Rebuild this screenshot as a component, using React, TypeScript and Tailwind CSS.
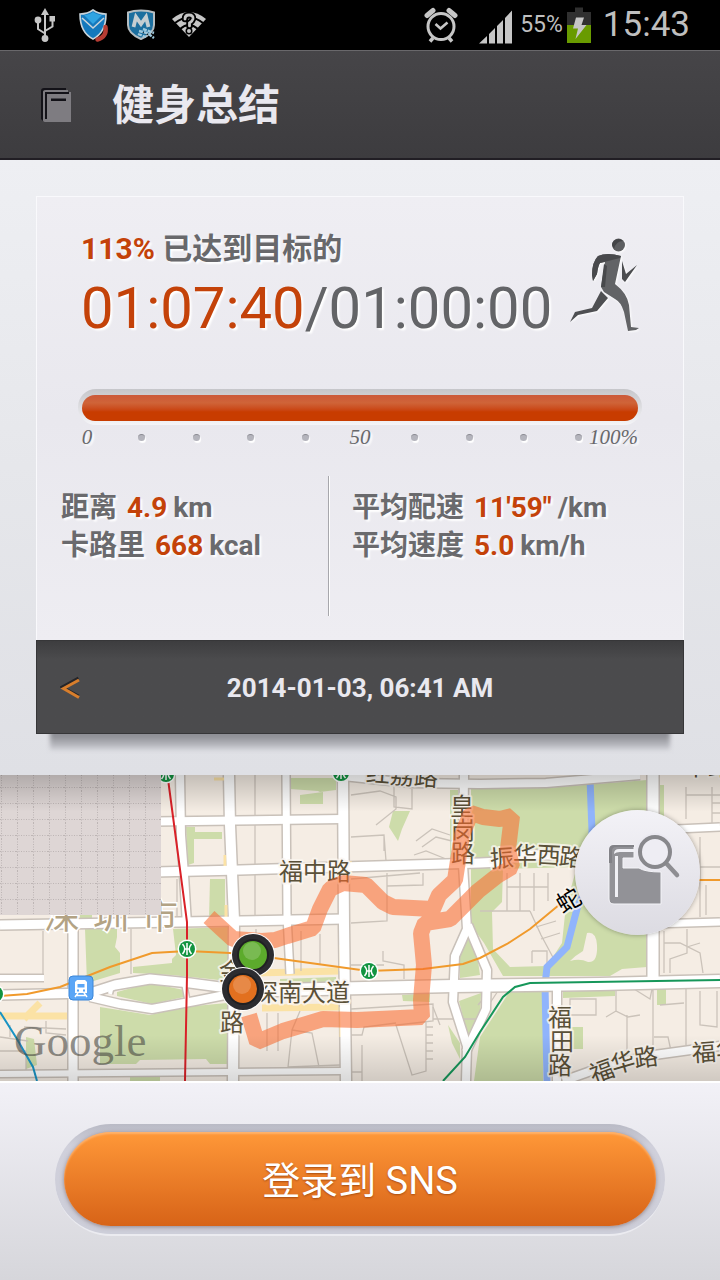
import { ReactNode } from "react";

type Stat = { label: string; value: string; unit: string };
type Label = { text: string; x: number; y: number; rotate?: number };

const leftStats: Stat[] = [
  { label: "距离", value: "4.9", unit: "km" },
  { label: "卡路里", value: "668", unit: "kcal" },
];

const rightStats: Stat[] = [
  { label: "平均配速", value: "11'59\"", unit: "/km" },
  { label: "平均速度", value: "5.0", unit: "km/h" },
];

const scaleMarks = ["0", "", "", "", "", "50", "", "", "", "", "100%"];

const roads: { d: string; w: number }[] = [
  { d: "M155 46.500L342 44", w: 8 },
  { d: "M155 97L240 95L480 88L500 87L520 80L580 80", w: 9 },
  { d: "M0 150L240 146L344 144", w: 9 },
  { d: "M0 220L90 218L115 210L150 204L190 208L235 214", w: 9 },
  { d: "M90 222L120 229L152 234L195 226L235 218", w: 8 },
  { d: "M110 219L112 210M184 208L188 228", w: 4 },
  { d: "M0 203L44 203", w: 6 },
  { d: "M0 299L344 296", w: 6 },
  { d: "M230 216L453 211L600 209L720 206", w: 12 },
  { d: "M73 150L73 306", w: 9 },
  { d: "M180 0L181 60L184 100L187 150", w: 8 },
  { d: "M229 0L230 50L234 145L233 306", w: 10 },
  { d: "M286 0L287 140L290 199", w: 7 },
  { d: "M343 0L344 150L346 306", w: 10 },
  { d: "M464 0L463 90L467 154L455 181L453 227L467 271L466 306", w: 8 },
  { d: "M468 150L487 195L486 234L466 277", w: 8 },
  { d: "M343 1L410 8L480 9L546 8L640 0", w: 8 },
  { d: "M653 0L653 205", w: 11 },
  { d: "M557 212L557 306", w: 8 },
  { d: "M655 55L720 52", w: 7 },
  { d: "M653 149L720 147", w: 7 },
  { d: "M563 306L605 291L647 281L720 271", w: 8 },
];

const lanes = [
  "M255 0L255 144M256 154L256 194",
  "M177 104L177 144M131 154L131 199M43 156L43 200",
  "M351 20L380 16L396 22L396 34L376 50M394 10L394 32L412 34L412 14",
  "M351 62L384 60L386 86M384 60L384 76",
  "M416 66L432 54L450 60M422 72L436 62L452 66M414 80L426 76L446 84",
  "M387 98L387 146L351 148M387 111L423 110L423 98M351 104L420 98",
  "M383 176L383 186L404 190L404 204M351 190L384 190",
  "M320 159L320 190M301 156L301 196",
  "M351 234L433 229L433 246L415 248L396 250L412 300L426 296L426 247",
  "M351 260L362 260L364 252L396 248M433 244L480 244M433 232L440 250",
  "M426 252L433 252M426 260L433 260M426 268L433 268M426 276L433 276M426 284L433 284",
  "M300 236L292 255L288 292L340 290M292 255L312 258L319 292M267 238L267 276M278 238L278 276",
  "M351 297L362 297L362 306M362 270L362 297",
  "M507 98L507 136M520 98L520 136M534 98L534 136M548 98L548 126M507 112L548 112M480 136L530 136",
  "M530 136L541 160L556 188M536 152L556 146M541 164L560 158M532 176L547 176L547 190M532 176L532 188",
  "M686 12L686 44M712 12L712 50M686 20L720 20M712 28L720 28M712 38L720 38",
  "M700 62L700 142M686 92L720 92M706 110L706 140M668 112L668 140",
  "M664 156L664 198M687 154L687 178L670 184L670 198M687 172L700 168M664 168L680 168L700 178L703 198",
  "M616 214L616 236L628 242L640 240M627 240L627 280M653 214L653 270M616 236L606 242M634 214L650 224L652 214",
  "M700 216L700 250L717 252L717 216M654 262L668 262L671 276M570 224L596 224L596 240L570 240Z",
  "M686 214L686 270M660 230L684 228",
  "M0 262L28 266M0 276L26 276L26 296M46 246L46 258L66 260M24 252L66 254M10 250L10 262",
  "M478 230L500 204M482 240L498 216",
];

const parks = [
  "M471 14L546 13L647 5L647 192L622 194L610 201L503 201L484 168L471 150Z",
  "M474 306L480 262L510 216L543 216L543 306Z",
  "M85 154L117 154L117 162L115 172L120 178L120 198L87 208Z",
  "M173 154L228 152L228 206L172 200L172 184L176 180Z",
  "M133 192L172 188L172 200L133 198Z",
  "M100 232L150 240L184 232L227 228L227 289L210 289L206 284L140 285L136 289L100 289Z",
  "M117 217L150 208L184 215L184 222L152 229L117 221Z",
  "M210 104L225 104L225 144L209 144Z",
  "M186 52L195 52L195 57L222 57L222 64L194 64L194 88L188 90Z",
  "M26 262L34 264L37 290L26 294Z",
  "M290 3L336 3L336 15L320 17L318 16L290 14Z",
  "M300 20L323 17L323 29L300 29Z",
  "M393 36L410 36L402 54L398 66L389 52Z",
  "M280 204L336 202L336 208L280 210Z",
  "M402 220L430 218L430 227L403 226Z",
  "M450 15L458 15L458 80L450 86Z",
  "M460 170L470 164L478 186L480 200L460 203Z",
  "M459 226L481 218L480 242L468 262Z",
  "M448 250L460 268L460 284L452 268Z",
  "M563 217L615 214L615 221L563 223Z",
  "M570 252L583 252L583 274L570 274Z",
  "M657 213L666 213L666 230L657 230Z",
  "M660 10L664 10L664 52L660 52Z",
  "M80 134L92 134L92 143L80 144Z",
  "M130 302L160 302L160 306L130 306Z",
];

const mapLabels: Label[] = [
  { text: "福中路", x: 315, y: 97 },
  { text: "深南大道", x: 302, y: 218 },
  { text: "红荔路", x: 402, y: 1, rotate: 4 },
  { text: "皇", x: 462, y: 32 },
  { text: "岗", x: 463, y: 56 },
  { text: "路", x: 463, y: 79 },
  { text: "振", x: 502, y: 84, rotate: -4 },
  { text: "华", x: 525, y: 81 },
  { text: "西", x: 549, y: 81, rotate: 3 },
  { text: "路", x: 571, y: 83, rotate: 6 },
  { text: "金", x: 231, y: 197 },
  { text: "路", x: 232, y: 248 },
  { text: "福", x: 560, y: 243 },
  { text: "田", x: 562, y: 267 },
  { text: "路", x: 560, y: 291 },
  { text: "福", x: 602, y: 297, rotate: -20 },
  { text: "华", x: 623, y: 288, rotate: -16 },
  { text: "路", x: 646, y: 283, rotate: -8 },
  { text: "福华", x: 716, y: 277, rotate: -4 },
  { text: "中路", x: 708, y: -8 },
];

const track =
  "M209 142L233 164L262 166L275 165L287 161L313 153L320 134L330 114L343 108L366 110L383 127L393 132L433 134L439 120L455 105L462 60L471 38L483 42L500 44L512 41L508 74L512 92L497 101L478 116L450 144L425 148L421 158L424 190L421 225L422 242L357 245L323 244L283 256L257 267L249 240";

const metroStops = [
  [187, 174],
  [369, 196],
  [166, -1],
  [341, -2],
  [-5, 219],
];

const UsbIcon = () => (
  <svg viewBox="0 0 36 36" className="size-9">
    <g fill="none" stroke="#c6c6c6" strokeWidth="2">
      <path d="M18 6V32M18 26.500L11 22V14M18 24L25.500 19.500V12" />
    </g>
    <g fill="#c6c6c6">
      <path d="M18 1L22 8H14Z" />
      <circle cx="18" cy="31.500" r="3.400" />
      <circle cx="11" cy="13" r="3.400" />
      <path d="M22.500 9h5.500v5.500h-5.500z" />
    </g>
  </svg>
);

const CallShieldIcon = () => (
  <svg viewBox="0 0 36 36" className="size-9">
    <path
      d="M18 3C22 6 27 7 31 7C31 18 28 27 18 32C8 27 5 18 5 7C9 7 14 6 18 3Z"
      fill="#1479bd"
      stroke="#c9d4da"
      strokeWidth="1.600"
    />
    <path d="M9 8C13 8 16 6 18 5C20 6 23 8 27 8L18 17Z" fill="#30a4e2" />
    <path d="M7 11L18 21L29 11" fill="none" stroke="#c9d4da" strokeWidth="1.600" />
    <path d="M30.500 20C31.500 26 29 31 22.500 32.500" fill="none" stroke="#b63c33" strokeWidth="4.500" strokeLinecap="round" />
  </svg>
);

const MobileShieldIcon = () => (
  <svg viewBox="0 0 36 36" className="size-9">
    <path
      d="M18 3.500C22 3.500 27 4 31 5.500V18C31 25 25 29 18 32C11 29 5 25 5 18V5.500C9 4 14 3.500 18 3.500Z"
      fill="#1c6f9f"
      stroke="#b5bdc1"
      strokeWidth="2"
    />
    <path d="M10.500 20L13 10L18 17L23 10L25.500 20" fill="none" stroke="#c5ced2" strokeWidth="3.800" />
    <path d="M16 24L24 26L31 31M20 22L31 26M15 27L23 30" stroke="#9fc9dd" strokeWidth="2.400" strokeDasharray="4 1" />
  </svg>
);

const WifiUnknownIcon = () => (
  <svg viewBox="0 0 36 36" className="size-9">
    <path d="M1 12Q18 -2 35 12L18 30Z" fill="#c6c6c6" />
    <path d="M4 16Q18 5 32 16M9 22Q18 14 27 22" fill="none" stroke="#000" strokeWidth="2" />
    <g fill="none" strokeLinecap="round">
      <path d="M14 12Q14 8 18 8Q22.500 8 22 12Q21.500 14 18.500 16V19" stroke="#000" strokeWidth="6.500" />
      <path d="M14 12Q14 8 18 8Q22.500 8 22 12Q21.500 14 18.500 16V19" stroke="#c6c6c6" strokeWidth="2.800" />
    </g>
    <circle cx="18" cy="24" r="3.500" />
    <circle cx="18" cy="24" r="2" fill="#c6c6c6" />
  </svg>
);

const AlarmIcon = () => (
  <svg viewBox="0 0 34 36" className="h-9 w-[34px]" fill="none" stroke="#c6c6c6">
    <circle cx="17" cy="19.500" r="13" strokeWidth="3" />
    <path d="M11.500 17L16.500 21.500L23.500 15.500" strokeWidth="2.600" />
    <path d="M3 8.500L9 3.500M31 8.500L25 3.500" strokeWidth="5" strokeLinecap="round" />
    <path d="M9 31L6 34.500M25 31L28 34.500" strokeWidth="3.500" />
  </svg>
);

const StatusBar = () => (
  <div className="flex h-[50px] items-center justify-between bg-black pl-[27px] pr-[30px] font-['Roboto',sans-serif] text-[#bfbfbf]">
    <div className="flex items-center gap-3">
      <UsbIcon />
      <CallShieldIcon />
      <MobileShieldIcon />
      <WifiUnknownIcon />
    </div>
    <div className="flex items-center">
      <AlarmIcon />
      <svg viewBox="0 0 34 34" className="ml-5 mt-1 h-[34px] w-[34px]" fill="#c6c6c6">
        <path d="M1 33.500L9 26V33.500ZM11 24L17 18V33.500H11ZM19 16L25 10V33.500H19ZM27 8L34 0.500V33.500H27Z" />
      </svg>
      <span className="ml-2 text-[23px] leading-8">55%</span>
      <svg viewBox="0 0 24 36" className="mx-1 h-9 w-6">
        <path d="M8 0.500H16V5H24V18H0V5H8Z" fill="#303030" />
        <path d="M0 18H24V36H0Z" fill="#699b00" />
        <path d="M9 10.500H17L14.500 18H19.500L8.500 32L11 21.500H6Z" fill="#c6c6c6" />
      </svg>
      <span className="ml-2 text-[35px] leading-[50px]">15:43</span>
    </div>
  </div>
);

const Header = () => (
  <header className="flex h-[110px] items-center gap-10 border-b-2 border-t border-b-[#211e24] border-t-[#69686b] bg-linear-to-b from-[#464548] to-[#3d3c3f] pl-10">
    <svg viewBox="0 0 32 36" className="h-9 w-8">
      <path d="M1 32V4Q1 1 4 1H26V3H6Q3 3 3 6V34Z" fill="#131218" />
      <path d="M3 33V5Q3 3 6 3H28V5H31V35H6Q3 35 3 33Z" fill="#7e7c81" />
      <path d="M5 5H29V7H7V32H5Z" fill="#131218" />
      <path d="M11 11.500H26V14H11Z" fill="#131218" />
    </svg>
    <h1 className="pt-0.5 text-[42px] font-bold leading-[60px] text-[#e9e8ef]">健身总结</h1>
  </header>
);

const Runner = () => (
  <svg viewBox="0 0 72 96" className="h-24 w-[72px] shrink-0 drop-shadow-[1px_1px_1px_white]">
    <circle cx="49.500" cy="8" r="6.500" fill="#5d5e61" />
    <path d="M43 8A6.500 6.500 0 0 1 54 4Q47 4 45 12Z" fill="#434447" />
    <path
      d="M52 19L46 47Q58 56 60 68L62 90L70 91L67 93L59 94L55 75Q52 65 46 62L35 55L32 50L36 25L31 26Q29 29 28 37L24 44L23 38Q23 25 29 19Q38 15 52 19Z"
      fill="#626366"
    />
    <path d="M52 19L51 21L31 26Q29 29 28 37L24 44L23 38Q23 25 29 19Q38 15 52 19ZM38 29L36 50L32 50L35 27Z" fill="#48494c" />
    <path d="M32 54L39 61L28 74L9 78L1 85L6 75L23 71Z" fill="#4e4f52" />
    <path d="M53 24L57 37L68 28L56 45L53 42Z" fill="#4b4c4f" />
  </svg>
);

const StatList = ({ stats }: { stats: Stat[] }) => (
  <dl className="text-[28px] leading-[38px] text-[#6a6a6d]">
    {stats.map((stat) => (
      <div key={stat.label} className="flex items-baseline whitespace-nowrap font-bold">
        <dt>{stat.label}</dt>
        <dd className="ml-2.5 flex gap-1.5">
          <span className="text-[#c44209]">{stat.value}</span>
          <span>{stat.unit}</span>
        </dd>
      </div>
    ))}
  </dl>
);

const SummaryCard = () => (
  <section className="relative mx-9">
    <div className="absolute inset-x-3.5 bottom-0 h-6 translate-y-4 bg-linear-to-b from-[#8d8e94] from-40% to-[#cfd0d6] blur-[2px]" />
    <div className="relative border border-b-0 border-[#f9f9fc] bg-linear-to-b from-[#efeef3] via-[#e9e8ee] to-[#eeedf2] pb-6 pt-7 [text-shadow:2px_2px_2px_white]">
      <div className="flex justify-between pl-11 pr-[42px]">
        <div>
          <p className="text-[30px] font-bold leading-12 text-[#68686b]">
            <span className="text-[#c44209]">113%</span> 已达到目标的
          </p>
          <p className="whitespace-nowrap text-[58px] leading-[70px] text-[#636467]">
            <span className="text-[#c44209]">01:07:40</span>/01:00:00
          </p>
        </div>
        <div className="pt-3">
          <Runner />
        </div>
      </div>

      <div className="px-[41px] pt-[46px]">
        <div
          role="progressbar"
          aria-label="已达到目标的"
          aria-valuenow={100}
          className="rounded-full bg-linear-to-b from-[#c6c6ca] to-[#f5f5f8] px-1 pb-1 pt-1.5"
        >
          <div className="h-[26px] w-full rounded-full bg-linear-to-b from-[#cc593a] via-[#cf6438] via-30% to-[#c83c00] to-65%" />
        </div>
        <div className="flex h-6 items-center justify-between px-1 font-['Liberation_Serif',serif] text-[21px] italic leading-6 text-[#68686b]">
          {scaleMarks.map((mark, i) => (
            <span
              key={i}
              className={
                i === scaleMarks.length - 1
                  ? "flex w-2.5 justify-end"
                  : "flex w-2.5 justify-center"
              }
            >
              {mark || (
                <i className="size-[7px] rounded-full border-t border-[#8b8b92] bg-[#b4b4bc] shadow-[1px_2px_1px_white]" />
              )}
            </span>
          ))}
        </div>
      </div>

      <div className="flex pl-6 pt-[27px]">
        <div className="w-[267px] pt-[13px]">
          <StatList stats={leftStats} />
        </div>
        <div className="h-[140px] border-l border-r border-l-[#a7a7ac] border-r-white" />
        <div className="pl-[22px] pt-[13px]">
          <StatList stats={rightStats} />
        </div>
      </div>
    </div>
    <div className="relative grid h-[94px] grid-cols-[66px_1fr_66px] items-center border border-[#363638] bg-linear-to-b from-[#3d3d3f] to-[#4b4b4d] to-20% pt-0.5">
      <button type="button" aria-label="上一个" className="flex h-full items-center justify-center">
        <svg viewBox="0 0 20 24" className="h-6 w-5" fill="none" strokeWidth="3">
          <path d="M18.500 2L2 11L18.500 20" stroke="#252528" />
          <path d="M19 4L3.500 12.500L19 21.500" stroke="#d87e2c" />
        </svg>
      </button>
      <time className="text-center text-[26px] font-bold text-[#e9e8ef]" dateTime="2014-01-03T06:41">
        2014-01-03, 06:41 AM
      </time>
    </div>
  </section>
);

const Marker = ({ x, y, fill }: { x: number; y: number; fill: string }) => (
  <g transform={`translate(${x} ${y})`}>
    <circle r="22" fill="#fff" />
    <circle r="21" fill="#2c2c30" />
    <circle r="16" fill="#202023" />
    <circle r="14" fill={fill} />
    <circle cx="-1" cy="-4" r="9" fill="#fff" opacity="0.180" />
  </g>
);

const MapLabels = ({ children }: { children: ReactNode }) => (
  <g
    fontSize="24"
    fill="#5a5038"
    stroke="#fbf6f0"
    strokeOpacity="0.800"
    strokeWidth="4"
    strokeLinejoin="round"
    paintOrder="stroke"
    textAnchor="middle"
  >
    {children}
  </g>
);

const RouteMap = () => (
  <svg viewBox="0 0 720 306" className="block h-auto w-full" role="img" aria-label="Google">
    <defs>
      <pattern id="grid" width="16" height="16" patternUnits="userSpaceOnUse">
        <path d="M1.500 0V16M0 12.500H16" stroke="#bdb5b4" strokeDasharray="1 1.500" />
      </pattern>
      <linearGradient id="edge" x1="0" y1="0" x2="0" y2="1">
        <stop offset="0" stopColor="#000" stopOpacity="0.200" />
        <stop offset="0.120" stopColor="#000" stopOpacity="0" />
        <stop offset="0.850" stopColor="#000" stopOpacity="0" />
        <stop offset="1" stopColor="#000" stopOpacity="0.150" />
      </linearGradient>
    </defs>
    <rect width="720" height="306" fill="#f5ede4" />
    <g fill="#cddcaa">
      {parks.map((d) => (
        <path key={d} d={d} />
      ))}
    </g>
    <path d="M503 94L577 92L566 130L562 168L547 191L510 192L493 174L492 137L502 127Z" fill="#f5ede4" />
    <path d="M587 158Q596 156 597 170Q598 188 588 187Q580 183 570 186Q576 180 583 176Z" fill="#f5ede4" />
    <path d="M0 241H70M255 198L340 196M262 233L340 232M24 244L40 228" stroke="#fbe2a5" strokeWidth="7" fill="none" />
    <g fill="none" stroke="#cbc3ba" strokeWidth="1.300">
      {lanes.map((d) => (
        <path key={d} d={d} />
      ))}
    </g>
    <path
      d="M590 4L592 56L590 104L578 130L567 172L547 192L545 210L547 306"
      fill="none"
      stroke="#90b4fc"
      strokeWidth="7"
    />
    <g fill="none" stroke="#c9c1b9" strokeLinejoin="round">
      {roads.map((road) => (
        <path key={road.d} d={road.d} strokeWidth={road.w + 3} />
      ))}
    </g>
    <path
      d="M225 80V96M226 130V150M340 88H352M350 90V100M341 170V196M341 232V262M224 4H214"
      stroke="#fbe2a5"
      strokeWidth="3"
    />
    <g fill="none" stroke="#fff" strokeLinejoin="round">
      {roads.map((road) => (
        <path key={road.d} d={road.d} strokeWidth={road.w} />
      ))}
    </g>
    <g fill="none" strokeWidth="2">
      <path d="M168 4L187 147L187 200L185 306" stroke="#d92128" />
      <path
        d="M0 221L27 219L60 212L110 192L152 178L187 176L230 178L274 183L368 196L423 194L463 189L480 183L507 169L530 154L565 125M640 105H720"
        stroke="#f09a2c"
      />
      <path d="M0 237L17 264L33 292L37 306" stroke="#1993c4" />
      <path d="M443 306L465 282L480 257L503 222L515 212L530 208L720 205" stroke="#16975a" />
    </g>
    {metroStops.map(([x, y]) => (
      <g key={x} transform={`translate(${x} ${y})`}>
        <circle r="9.500" fill="#fff" />
        <circle r="8" fill="#129440" />
        <path
          d="M0 -6V6M-4.500 -5Q0 0 -4.500 5M4.500 -5Q0 0 4.500 5M-3 0H3"
          stroke="#fff"
          strokeWidth="1.500"
          fill="none"
        />
      </g>
    ))}
    <g transform="translate(69 201)">
      <rect width="24" height="24" rx="4" fill="#5ba6f6" stroke="#3b86d8" />
      <path d="M8 4H16L18 6V17H6V6Z" fill="#fff" />
      <path d="M8.500 8H15.500V11.500H8.500ZM8 13.500H10V15.500H8ZM14 13.500H16V15.500H14Z" fill="#5ba6f6" />
      <path d="M9 17L6 21M15 17L18 21M8 19.500H16" stroke="#fff" strokeWidth="1.500" />
    </g>
    <text y="154" fontSize="36" fill="#b3a384" stroke="#fff" strokeWidth="3" paintOrder="stroke" textAnchor="middle">
      <tspan x="62">深</tspan>
      <tspan x="111">圳</tspan>
      <tspan x="160">市</tspan>
    </text>
    <MapLabels>
      {mapLabels.map((label) => (
        <text
          key={`${label.text}-${label.x}-${label.y}`}
          transform={`translate(${label.x} ${label.y}) rotate(${label.rotate ?? 0})`}
          y="8"
        >
          {label.text}
        </text>
      ))}
      <text transform="translate(569 126) rotate(-30)" y="8" fill="#000">
        蛇
      </text>
    </MapLabels>
    <rect width="161" height="140" fill="#ded6d5" />
    <rect width="161" height="140" fill="url(#grid)" />
    <path d={track} fill="none" stroke="#fa6a2c" strokeOpacity="0.560" strokeWidth="16" strokeLinejoin="bevel" />
    <Marker x={253} y={180} fill="#5cab2c" />
    <Marker x={243} y={214} fill="#e2701f" />
    <text
      x="14"
      y="281"
      fontSize="45"
      fill="#4a4a44"
      fillOpacity="0.600"
      className="font-['Liberation_Serif',serif]"
    >
      Google
    </text>
    <rect width="720" height="306" fill="url(#edge)" />
  </svg>
);

const MapDetailButton = () => (
  <button
    type="button"
    aria-label="查看记录"
    className="absolute right-5 top-[35px] size-[125px] rounded-full bg-linear-to-b from-[#f3f2f7] to-[#dcdbe2] shadow-[0_0_5px_rgba(0,0,0,0.35)]"
  >
    <svg viewBox="0 0 125 125" className="size-full">
      <path
        d="M34 40Q34 35 39 35H59V48H48V58H64Q70 62 86 62V94H39Q34 94 34 89Z"
        fill="#929297"
        stroke="#f4f4f8"
        strokeWidth="1"
      />
      <path d="M34 53V40Q34 35 39 35H59V37H41Q37 37 37 41V53Z" fill="#828287" />
      <path d="M39 44Q39 39 44 39H59V42H45Q41 42 39 44ZM40 46H43V87H40Z" fill="#f0f0f5" />
      <circle cx="80" cy="42" r="19" fill="#ebeaf1" />
      <path d="M91 53L102 65" stroke="#8e8e92" strokeWidth="4.500" strokeLinecap="round" />
      <circle cx="80" cy="42" r="15" fill="#eeedf3" stroke="#88888c" strokeWidth="4" />
    </svg>
  </button>
);

const App = () => (
  <div className="flex min-h-screen flex-col bg-[#e3e4e8] font-['Roboto','Noto_Sans_CJK_SC',sans-serif]">
    <StatusBar />
    <Header />
    <main className="flex flex-1 flex-col">
      <div className="bg-linear-to-b from-[#eeeff3] via-[#e6e7eb] to-[#dfe0e5] pb-[41px] pt-9">
        <SummaryCard />
      </div>

      <div className="relative">
        <RouteMap />
        <MapDetailButton />
      </div>

      <div className="flex-1 border-t-2 border-white bg-linear-to-b from-[#f2f1f7] to-[#d6d6db] px-[55px] pt-[41px] shadow-[0_-1px_0_#aaa]">
        <div className="rounded-full border-b-2 border-[#ebebf0] bg-linear-to-b from-[#b9bac5] via-[#d0d0db] via-20% to-[#cdced9] px-[9px] pb-2 pt-2">
          <button
            type="button"
            className="h-[94px] w-full rounded-full bg-linear-to-b from-[#ff9838] to-[#d76317] pt-1 text-[38px] text-white shadow-[0_1px_4px_rgba(90,60,60,0.5),inset_0_2px_2px_rgba(255,190,130,0.7)] [text-shadow:0_1px_2px_#a84c10]"
          >
            登录到 SNS
          </button>
        </div>
      </div>
    </main>
  </div>
);

export default App;
